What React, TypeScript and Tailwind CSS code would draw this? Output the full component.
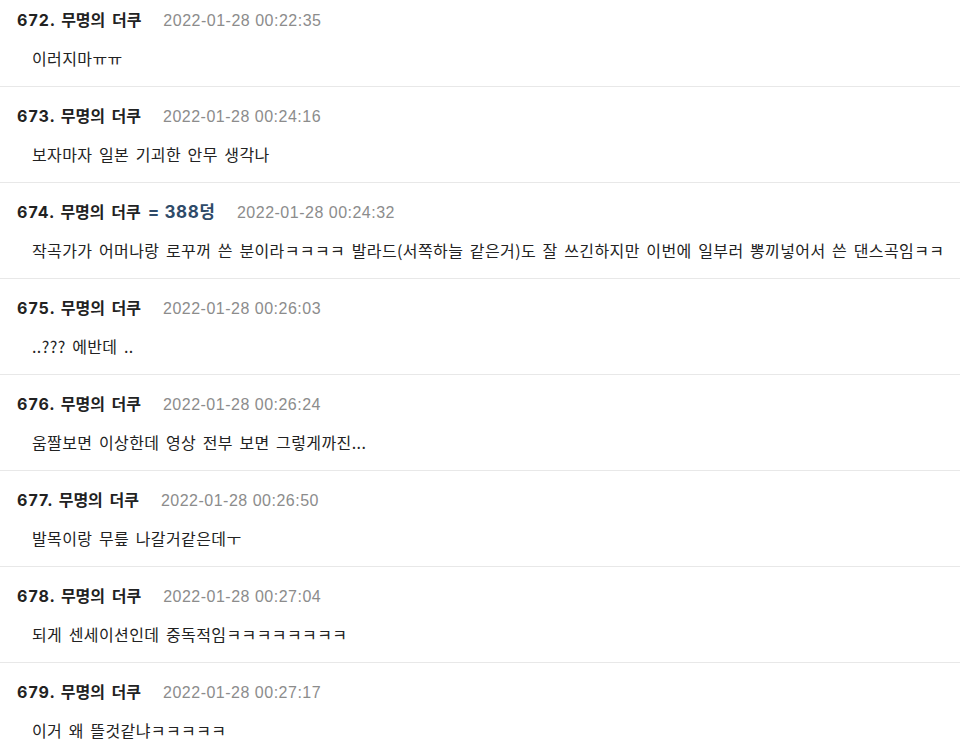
const comments = [
  { no: 672, time: '2022-01-28 00:22:35', text: '이러지마ㅠㅠ' },
  { no: 673, time: '2022-01-28 00:24:16', text: '보자마자 일본 기괴한 안무 생각나' },
  {
    no: 674,
    time: '2022-01-28 00:24:32',
    tag: '388덩',
    text: '작곡가가 어머나랑 로꾸꺼 쓴 분이라ㅋㅋㅋㅋ 발라드(서쪽하늘 같은거)도 잘 쓰긴하지만 이번에 일부러 뽕끼넣어서 쓴 댄스곡임ㅋㅋ',
  },
  { no: 675, time: '2022-01-28 00:26:03', text: '..??? 에반데 ..' },
  { no: 676, time: '2022-01-28 00:26:24', text: '움짤보면 이상한데 영상 전부 보면 그렇게까진...' },
  { no: 677, time: '2022-01-28 00:26:50', text: '발목이랑 무릎 나갈거같은데ㅜ' },
  { no: 678, time: '2022-01-28 00:27:04', text: '되게 센세이션인데 중독적임ㅋㅋㅋㅋㅋㅋㅋㅋ' },
  { no: 679, time: '2022-01-28 00:27:17', text: '이거 왜 뜰것같냐ㅋㅋㅋㅋㅋ' },
];

export default function App() {
  return (
    <div className="w-[960px] h-[756px] overflow-hidden bg-white text-[#222] font-['Noto_Sans_CJK_KR',sans-serif]">
      <ul className="-mt-[9px]">
        {comments.map((c) => (
          <li key={c.no} className="h-[96px] border-b border-[#e8e8e8] pl-[17px] pt-[16px]">
            <div className="flex items-baseline h-[24px] leading-[24px]">
              <span className="font-bold text-[16px]">
                <span className="font-['Inter',sans-serif] tracking-[1px]">{c.no}.</span>
                <span className="ml-[5px] [word-spacing:3px]">무명의 더쿠</span>
                {c.tag && (
                  <span className="ml-[7px] text-[#2f4b69]">
                    <span className="font-['Inter',sans-serif] text-[17px] tracking-[0.6px]">= 388</span>
                    <span className="text-[17px]">덩</span>
                  </span>
                )}
              </span>
              <span className="ml-[22px] text-[16px] tracking-[0.5px] text-[#8c8c8c] font-['Liberation_Sans',sans-serif]">{c.time}</span>
            </div>
            <p className="mt-[15px] pl-[15px] text-[16px] leading-[24px] tracking-[0.4px] [word-spacing:2.5px]">{c.text}</p>
          </li>
        ))}
      </ul>
    </div>
  );
}
